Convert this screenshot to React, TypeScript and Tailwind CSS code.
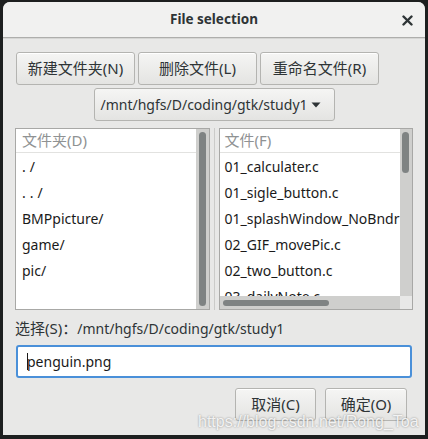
const font = { fontFamily: '"Noto Sans", "Noto Sans CJK SC", sans-serif' };

function Cjk({ children }: { children: string }) {
  return <span className="text-[15px]">{children}</span>;
}

function Btn({ cjk, tail, className }: { cjk: string; tail: string; className?: string }) {
  return (
    <div
      className={`flex h-[33px] items-center justify-center rounded-[3px] border border-[#b4b4b1] bg-gradient-to-b from-[#f5f5f4] to-[#e4e4e2] text-[15px] text-[#2e3436] shadow-[inset_0_1px_0_#ffffff] ${className ?? ''}`}
    >
      <Cjk>{cjk}</Cjk>
      <span>{tail}</span>
    </div>
  );
}

const dirs = ['./', '../', 'BMPpicture/', 'game/', 'pic/'];
const files = [
  '01_calculater.c',
  '01_sigle_button.c',
  '01_splashWindow_NoBndr',
  '02_GIF_movePic.c',
  '02_two_button.c',
  '03_dailyNote.c',
];

export default function App() {
  return (
    <div className="relative h-[439px] w-[428px] overflow-hidden bg-[#1d1f1f] pl-[3px] pt-[2px]" style={font}>
      <div className="flex h-[433px] w-[422px] flex-col rounded-t-[7px] bg-[#e8e8e7]">
        {/* title bar */}
        <div className="relative flex h-[36px] items-center justify-center rounded-t-[7px] border-b border-[#aeaeac] bg-[#f1f1f0]">
          <span className="text-[13.5px] font-bold text-[#2e3436]">File selection</span>
          <svg className="absolute right-[12px] top-[13px]" width="11" height="11" viewBox="0 0 11 11">
            <path d="M1.5 1.5 L9.5 9.5 M9.5 1.5 L1.5 9.5" stroke="#2e3436" strokeWidth="2.4" strokeLinecap="round" />
          </svg>
        </div>
        <div className="h-px bg-[#d6d6d4]" />

        <div className="flex flex-col px-[12px] pt-[13px]">
          <div className="flex gap-[3px] pl-px">
            <Btn cjk="新建文件夹" tail="(N)" className="w-[119px]" />
            <Btn cjk="删除文件" tail="(L)" className="w-[119px]" />
            <Btn cjk="重命名文件" tail="(R)" className="w-[119px]" />
          </div>

          <div className="mt-[3px] flex justify-center">
            <div className="flex h-[33px] w-[241px] items-center justify-between rounded-[3px] border border-[#b4b4b1] bg-gradient-to-b from-[#f5f5f4] to-[#e4e4e2] pl-[6px] pr-[13px] text-[14px] text-[#2e3436]">
              <span>/mnt/hgfs/D/coding/gtk/study1</span>
              <svg width="10" height="6" viewBox="0 0 10 6">
                <path d="M0.5 0.5 L9.5 0.5 L5 5.5 Z" fill="#2e3436" />
              </svg>
            </div>
          </div>

          {/* panes */}
          <div className="mt-[7px] flex h-[182px]">
            <div className="flex w-[195px] border border-[#a8a8a6] bg-white">
              <div className="flex flex-1 flex-col">
                <div className="flex h-[24px] items-center border-b border-[#e2e2e0] pl-[6px] text-[15px] text-[#8f9293]">
                  文件夹(D)
                </div>
                {dirs.map((d) => (
                  <div
                    key={d}
                    className={`flex h-[26px] items-center pl-[6px] text-[14px] text-[#1a1a1a] ${d.length < 4 ? 'tracking-[4px]' : ''}`}
                  >
                    {d}
                  </div>
                ))}
              </div>
              <div className="flex w-[13px] justify-center bg-[#cfcfcd] py-[3px]">
                <div className="w-[7px] rounded-full bg-[#7f8383]" />
              </div>
            </div>

            <div className="flex w-[9px] justify-center">
              <div className="w-px bg-[#cbcbc9]" />
            </div>

            <div className="flex w-[195px] flex-col border border-[#a8a8a6] bg-white">
              <div className="flex min-h-0 flex-1">
                <div className="flex min-w-0 flex-1 flex-col overflow-hidden">
                  <div className="flex h-[24px] shrink-0 items-center border-b border-[#e2e2e0] pl-[5px] text-[15px] text-[#8f9293]">
                    文件(F)
                  </div>
                  {files.map((f) => (
                    <div key={f} className="flex h-[26px] shrink-0 items-center whitespace-nowrap pl-[5px] text-[14px] text-[#1a1a1a]">
                      {f}
                    </div>
                  ))}
                </div>
                <div className="w-[12px] bg-[#cfcfcd] pl-[2px] pt-[3px]">
                  <div className="h-[41px] w-[7px] rounded-full bg-[#7f8383]" />
                </div>
              </div>
              <div className="flex h-[13px]">
                <div className="flex flex-1 items-center bg-[#cfcfcd] pl-[3px]">
                  <div className="h-[6px] w-[106px] rounded-full bg-[#7f8383]" />
                </div>
                <div className="w-[12px] bg-[#e8e8e7]" />
              </div>
            </div>
          </div>

          <div className="mt-[7px] flex items-center text-[14px] text-[#2e3436]">
            <Cjk>选择(S)：</Cjk>
            <span>/mnt/hgfs/D/coding/gtk/study1</span>
          </div>

          <div className="ml-px mt-[5px] flex h-[33px] w-[396px] items-center rounded-[3px] border-2 border-[#4a90d9] bg-white pl-[9px] text-[14px] text-[#1a1a1a]">
            <span className="mr-[-1px] h-[17px] w-px bg-[#1a1a1a]" />
            penguin.png
          </div>

          <div className="mt-[10px] flex justify-end gap-[9px] pr-[6px]">
            <Btn cjk="取消" tail="(C)" className="w-[81px]" />
            <Btn cjk="确定" tail="(O)" className="w-[82px]" />
          </div>
        </div>
      </div>

      <div
        className="absolute left-[198px] top-[410px] text-[16px] text-white/85 [text-shadow:0_0_2px_rgba(0,0,0,0.45)]"
        style={{ fontFamily: '"Liberation Sans", Arial, sans-serif' }}
      >
        https://blog.csdn.net/Rong_Toa
      </div>
    </div>
  );
}
